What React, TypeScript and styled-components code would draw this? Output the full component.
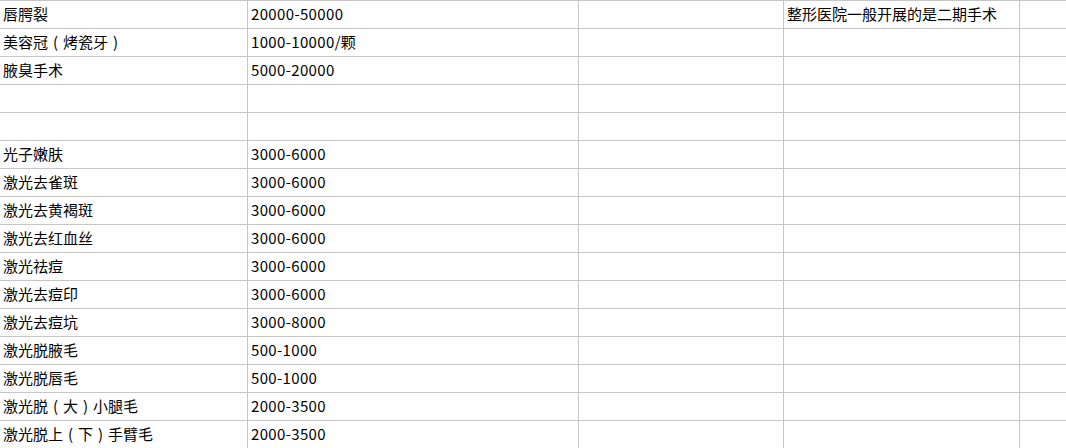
import React from 'react';
import styled, { createGlobalStyle } from 'styled-components';

const GlobalStyle = createGlobalStyle`
  html, body {
    margin: 0;
    padding: 0;
    background: #ffffff;
    overflow: hidden;
  }
`;

const columnWidths = [248, 331, 205, 236, 60];

const Sheet = styled.div`
  display: grid;
  grid-template-columns: ${columnWidths.map((w) => `${w}px`).join(' ')};
  grid-auto-rows: 28px;
  border-top: 1px solid #c6c6c6;
  width: 1080px;
  font-family: "Noto Sans CJK SC", "Noto Sans", sans-serif;
  font-size: 15px;
  color: #000000;
`;

const Cell = styled.div<{ $numeric?: boolean }>`
  box-sizing: border-box;
  border-right: 1px solid #c6c6c6;
  border-bottom: 1px solid #c6c6c6;
  padding: 0 0 2px 3px;
  display: flex;
  align-items: center;
  white-space: nowrap;
  overflow: visible;
  line-height: 1;
  letter-spacing: ${(p) => (p.$numeric ? '0.35px' : '0')};
`;

// fullwidth brackets drawn centred in a one-em box, as the sheet font does
const Bracket = styled.span`
  display: inline-block;
  width: 1em;
  text-align: center;
`;

const renderText = (value: string) =>
  value.split(/([（）])/).map((part, i) => {
    if (part === '（') return <Bracket key={i}>(</Bracket>;
    if (part === '）') return <Bracket key={i}>)</Bracket>;
    return part;
  });

const rows: string[][] = [
  ['唇腭裂', '20000-50000', '', '整形医院一般开展的是二期手术', ''],
  ['美容冠（烤瓷牙）', '1000-10000/颗', '', '', ''],
  ['腋臭手术', '5000-20000', '', '', ''],
  ['', '', '', '', ''],
  ['', '', '', '', ''],
  ['光子嫩肤', '3000-6000', '', '', ''],
  ['激光去雀斑', '3000-6000', '', '', ''],
  ['激光去黄褐斑', '3000-6000', '', '', ''],
  ['激光去红血丝', '3000-6000', '', '', ''],
  ['激光祛痘', '3000-6000', '', '', ''],
  ['激光去痘印', '3000-6000', '', '', ''],
  ['激光去痘坑', '3000-8000', '', '', ''],
  ['激光脱腋毛', '500-1000', '', '', ''],
  ['激光脱唇毛', '500-1000', '', '', ''],
  ['激光脱（大）小腿毛', '2000-3500', '', '', ''],
  ['激光脱上（下）手臂毛', '2000-3500', '', '', ''],
];

const App = () => {
  return (
    <>
      <GlobalStyle />
      <Sheet>
        {rows.map((row, r) =>
          row.map((value, c) => (
            <Cell key={`${r}-${c}`} $numeric={c === 1}>
              {renderText(value)}
            </Cell>
          ))
        )}
      </Sheet>
    </>
  );
};

export default App;
